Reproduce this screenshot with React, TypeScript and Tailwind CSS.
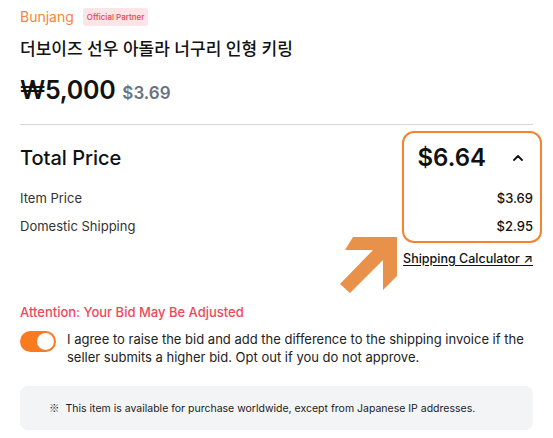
import React from "react";

const font = { fontFamily: "Inter, 'Noto Sans CJK KR', sans-serif" };

function ChevronUp() {
  return (
    <svg width="14" height="14" viewBox="0 0 14 14" fill="none">
      <path d="M3 9l4-4 4 4" stroke="#111" strokeWidth="1.8" strokeLinecap="round" strokeLinejoin="round" />
    </svg>
  );
}

export default function App() {
  return (
    <div className="relative w-[553px] h-[438px] bg-white overflow-hidden px-5 text-[#111]" style={font}>
      {/* header */}
      <div className="flex items-center gap-[9px] pt-[6px]">
        <span className="text-[14px] text-[#f5843a]">Bunjang</span>
        <span className="rounded-[3px] bg-[#fde4e6] px-[4px] py-[3px] text-[8px] font-medium leading-[12px] text-[#ef3e54]">
          Official Partner
        </span>
      </div>
      <h1 className="mt-[10px] text-[17px] font-medium leading-[24px]">더보이즈 선우 아돌라 너구리 인형 키링</h1>
      <div className="mt-[11px] flex items-baseline gap-[7px]">
        <span className="text-[25px] font-semibold tracking-[-0.3px]">₩5,000</span>
        <span className="text-[17px] font-semibold text-[#6b7280]">$3.69</span>
      </div>

      <div className="mt-[14px] h-px bg-[#d6d8dc]" />

      {/* total */}
      <div className="mt-[15px] flex items-center justify-between">
        <span className="text-[20px] font-medium">Total Price</span>
        <div className="flex items-center gap-[25px] pr-[8px]">
          <span className="text-[24px] font-semibold">$6.64</span>
          <ChevronUp />
        </div>
      </div>
      <div className="mt-[12px] flex justify-between text-[13px] leading-[20px]">
        <span className="text-[#333]">Item Price</span>
        <span className="font-medium">$3.69</span>
      </div>
      <div className="mt-[8px] flex justify-between text-[13px] leading-[20px]">
        <span className="text-[#333]">Domestic Shipping</span>
        <span className="font-medium">$2.95</span>
      </div>
      <div className="mt-[14px] flex justify-end">
        <span className="text-[12.5px] font-medium underline underline-offset-2">Shipping Calculator ↗</span>
      </div>

      {/* attention */}
      <p className="mt-[35px] text-[13px] font-medium text-[#f0485b]">Attention: Your Bid May Be Adjusted</p>
      <div className="mt-[7px] flex items-start gap-[11px]">
        <div className="mt-[1px] flex h-[21px] w-[36px] shrink-0 items-center justify-end rounded-full bg-[#f97a1f] pr-[2px]">
          <div className="h-[17px] w-[17px] rounded-full bg-white" />
        </div>
        <p className="text-[13px] leading-[18px] text-[#222]">
          I agree to raise the bid and add the difference to the shipping invoice if the seller submits a higher bid. Opt out if you do not approve.
        </p>
      </div>

      <div className="mt-[20px] rounded-[8px] bg-[#f3f4f6] px-[29px] py-[15px] text-[10.5px] leading-[13px] text-[#222]">
        <span className="mr-[6px]" style={{ fontFamily: "'Noto Sans CJK KR', sans-serif" }}>※</span>
        This item is available for purchase worldwide, except from Japanese IP addresses.
      </div>

      {/* annotation overlay */}
      <div className="absolute left-[402px] top-[131px] h-[112px] w-[140px] rounded-[12px] border-[2.5px] border-[#f5822f]" />
      <svg className="absolute left-0 top-0" width="553" height="438" viewBox="0 0 553 438">
        <polygon
          points="353,237 397,237 397,276 383,290 383,260 350,293 340,284 373,250 345,250"
          fill="#e8914a"
        />
      </svg>
    </div>
  );
}
